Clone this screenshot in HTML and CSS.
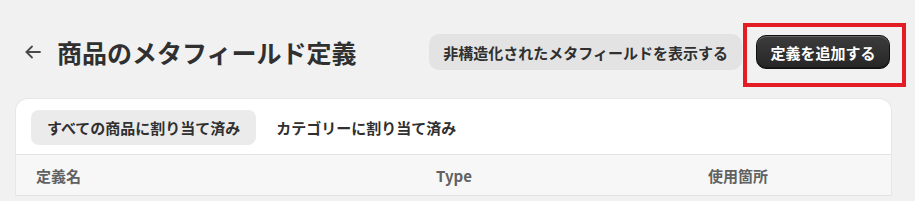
FILE: index.html
```html
<!DOCTYPE html>
<html lang="ja">
<head>
<meta charset="utf-8">
<title>商品のメタフィールド定義</title>
<link rel="stylesheet" href="styles.css">
</head>
<body>
<div class="page">
  <header class="page-header">
    <div class="title-group">
      <button class="back" aria-label="戻る">
        <svg width="20" height="20" viewBox="0 0 20 20" fill="none" stroke="#4a4a4a" stroke-width="1.8" stroke-linecap="round" stroke-linejoin="round"><path d="M17 10H3.5"/><path d="M9 4.5L3.5 10L9 15.5"/></svg>
      </button>
      <h1 class="title">商品のメタフィールド定義</h1>
    </div>
    <div class="actions">
      <button class="btn btn-secondary">非構造化されたメタフィールドを表示する</button>
      <div class="highlight-wrap">
        <button class="btn btn-primary">定義を追加する</button>
        <span class="highlight"></span>
      </div>
    </div>
  </header>
  <section class="card">
    <div class="tabs">
      <button class="tab tab-active">すべての商品に割り当て済み</button>
      <button class="tab">カテゴリーに割り当て済み</button>
    </div>
    <div class="table-head">
      <div class="col col-name">定義名</div>
      <div class="col col-type">Type</div>
      <div class="col col-usage">使用箇所</div>
    </div>
  </section>
</div>
</body>
</html>
```
FILE: styles.css
```css
* { box-sizing: border-box; }
html, body {
  margin: 0;
  background: #f1f1f1;
  font-family: "Noto Sans CJK JP", "Noto Sans", sans-serif;
  color: #303030;
}
.page {
  padding: 30px 24px 0 16px;
}
.page-header {
  display: flex;
  align-items: center;
  justify-content: space-between;
  height: 44px;
  padding: 0 1px 0 7px;
}
.title-group {
  display: flex;
  align-items: center;
  gap: 14px;
}
.back {
  display: flex;
  align-items: center;
  justify-content: center;
  width: 20px;
  height: 20px;
  padding: 0;
  border: 0;
  background: none;
}
.title {
  margin: 0;
  font-size: 25px;
  font-weight: 700;
  line-height: 1;
  color: #303030;
}
.actions {
  display: flex;
  align-items: center;
  gap: 14px;
}
.btn {
  font-family: inherit;
  font-size: 15px;
  font-weight: 700;
  line-height: 1;
  border-radius: 10px;
  padding: 0 14px;
  white-space: nowrap;
}
.btn-secondary {
  height: 36px;
  background: #e3e3e3;
  border: 0;
  color: #303030;
}
.btn-primary {
  height: 34px;
  width: 134px;
  padding: 0;
  color: #ffffff;
  background: linear-gradient(#3c3c3c, #262626);
  border: 1px solid #111111;
  box-shadow: inset 0 1px 0 rgba(255,255,255,0.22), inset 0 -1px 0 rgba(0,0,0,0.4);
}
.highlight-wrap {
  position: relative;
  display: flex;
}
.highlight {
  position: absolute;
  top: -12px;
  left: -13px;
  right: -16px;
  bottom: -18px;
  border: 4px solid #e41d25;
  pointer-events: none;
}
.card {
  margin-top: 25px;
  background: #ffffff;
  border-radius: 12px 12px 0 0;
  box-shadow: 0 0 0 1px rgba(0,0,0,0.04);
  overflow: hidden;
}
.tabs {
  display: flex;
  gap: 4px;
  padding: 11px 15px 9px;
  border-bottom: 1px solid #e3e3e3;
}
.tab {
  height: 35px;
  padding: 0 16px;
  border: 0;
  border-radius: 8px;
  background: transparent;
  font-family: inherit;
  font-size: 15px;
  font-weight: 700;
  color: #303030;
  white-space: nowrap;
}
.tab-active {
  background: #ebebeb;
}
.table-head {
  display: flex;
  align-items: center;
  height: 41px;
  background: #f7f7f7;
  border-bottom: 1px solid #e3e3e3;
  padding-left: 20px;
  font-size: 15px;
  font-weight: 700;
  color: #616161;
}
.col-name { width: 400px; }
.col-type { width: 272px; }
.col-usage { flex: 1; }
```
